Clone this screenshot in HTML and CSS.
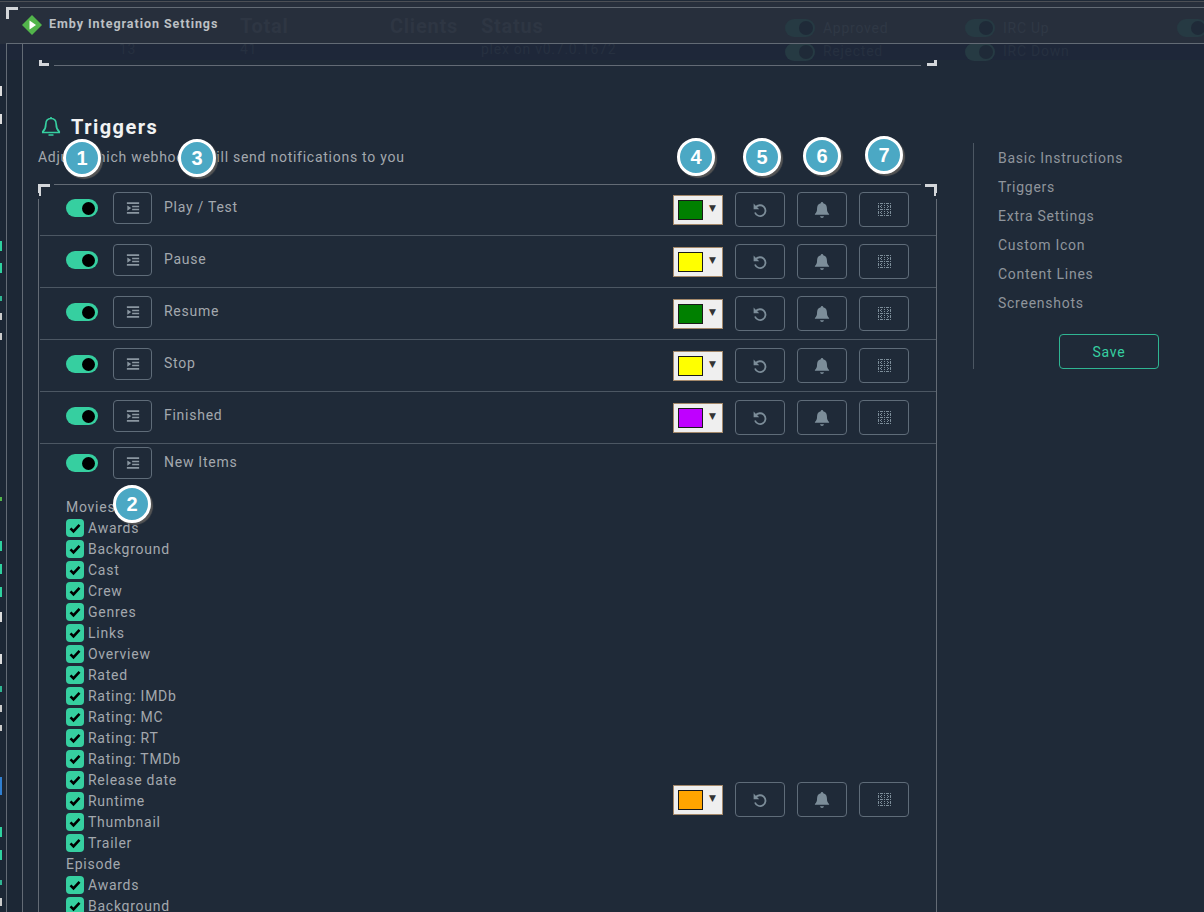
FILE: index.html
```html
<!doctype html>
<html>
<head>
<meta charset="UTF-8">
<title>Emby Integration Settings</title>
<link rel="stylesheet" href="styles.css">
</head>
<body>

<svg class="defs" width="0" height="0">
  <symbol id="ico-indent" viewBox="0 0 16 16">
    <path d="M1 1.5h14v2H1zM7 5.5h8v1.6H7zM7 8.9h8v1.6H7zM1 12.5h14v2H1zM1.5 5v6l4.5-3z"/>
  </symbol>
  <symbol id="ico-reset" viewBox="0 0 16 16">
    <path d="M3.6 5.6A5.4 5.4 0 1 1 3 10.5" fill="none" stroke="currentColor" stroke-width="1.8"/>
    <path d="M1.6 1.6v5.6h5.6z"/>
  </symbol>
  <symbol id="ico-bell" viewBox="0 0 16 16">
    <path d="M8 .8c.7 0 1.1.5 1.1 1.2 2.3.5 3.3 2.4 3.3 4.6 0 2.600.6 3.600 1.900 4.900v.8H1.700v-.8c1.300-1.300 1.900-2.300 1.900-4.900 0-2.200 1-4.100 3.300-4.600C6.900 1.300 7.300.8 8 .8zM6.300 13.500h3.400C9.600 14.500 8.900 15 8 15s-1.600-.5-1.700-1.500z"/>
  </symbol>
  <symbol id="ico-grid" viewBox="0 0 13 13">
    <path d="M.5 0v13M3.500 0v13M6.500 0v13M9.500 0v13M12.500 0v13" fill="none" stroke="currentColor" stroke-dasharray="1 1"/>
    <path d="M0 .5h13M0 6.500h13M0 12.500h13M0 3.500h3M10 3.500h3M0 9.500h3M10 9.500h3" fill="none" stroke="currentColor" stroke-dasharray="1 1"/>
  </symbol>
  <symbol id="ico-check" viewBox="0 0 12 12">
    <path d="M1.500 6.300l3 3 6-6.400" fill="none" stroke="currentColor" stroke-width="2.600"/>
  </symbol>
</svg>

<!-- page behind the modal -->
<div class="behind">
  <div class="behind-head"></div>
  <div class="behind-band"></div>
  <div class="behind-strip"></div>
  <div class="ticks"></div>
  <span class="ghost g-total">Total</span>
  <span class="ghost g-clients">Clients</span>
  <span class="ghost g-status">Status</span>
  <span class="ghost small g-13">13</span>
  <span class="ghost small g-41">41</span>
  <span class="ghost small g-ver">plex on v0.7.0.1672</span>
  <span class="ghost small g-app">Approved</span>
  <span class="ghost small g-rej">Rejected</span>
  <span class="ghost small g-up">IRC Up</span>
  <span class="ghost small g-down">IRC Down</span>
  <span class="gtoggle t-app"></span>
  <span class="gtoggle t-rej"></span>
  <span class="gtoggle t-up"></span>
  <span class="gtoggle t-down"></span>
  <span class="gtoggle t-far"></span>
</div>

<div class="modal">
  <span class="mark mark-tl"></span>
  <header class="modal-head">
    <svg class="logo" viewBox="0 0 20 20" width="20" height="20">
      <path d="M10 0l10 10-10 10L0 10z" fill="#52b54b"/>
      <path d="M7.500 5.500l6.500 4.500-6.500 4.500z" fill="#fff"/>
    </svg>
    <span class="modal-title">Emby Integration Settings</span>
  </header>

  <div class="modal-body">
    <div class="prev-panel">
      <span class="mark mark-bl"></span>
      <span class="mark mark-br"></span>
    </div>

    <div class="columns">
      <main class="content">
        <h2 class="title">
          <svg viewBox="0 0 20 22" width="20" height="22">
            <path d="M10 2.500c-3.400 0-5.200 2.400-5.200 5.700 0 3.500-.8 5.400-3 7.500v.8h16.400v-.8c-2.200-2.100-3-4-3-7.500 0-3.300-1.800-5.700-5.200-5.700zM10 1v1.500M7.500 19h5" fill="none" stroke="#36cfa0" stroke-width="1.700"/>
          </svg>
          Triggers
        </h2>
        <p class="subtitle">Adjust which webhooks will send notifications to you</p>

        <section class="panel">
          <span class="mark mark-tl"></span>
          <span class="mark mark-tr"></span>

          <div class="row">
            <div class="row-main">
              <div class="row-line">
                <span class="toggle"></span>
                <button class="ico-btn"><svg><use href="#ico-indent"/></svg></button>
                <span class="row-name">Play / Test</span>
              </div>
            </div>
            <div class="row-actions">
              <span class="picker"><span class="swatch green"></span><span class="caret">▼</span></span>
              <button class="act-btn"><svg class="i-reset"><use href="#ico-reset"/></svg></button>
              <button class="act-btn"><svg class="i-bell"><use href="#ico-bell"/></svg></button>
              <button class="act-btn"><svg class="i-grid"><use href="#ico-grid"/></svg></button>
            </div>
          </div>

          <div class="row">
            <div class="row-main">
              <div class="row-line">
                <span class="toggle"></span>
                <button class="ico-btn"><svg><use href="#ico-indent"/></svg></button>
                <span class="row-name">Pause</span>
              </div>
            </div>
            <div class="row-actions">
              <span class="picker"><span class="swatch yellow"></span><span class="caret">▼</span></span>
              <button class="act-btn"><svg class="i-reset"><use href="#ico-reset"/></svg></button>
              <button class="act-btn"><svg class="i-bell"><use href="#ico-bell"/></svg></button>
              <button class="act-btn"><svg class="i-grid"><use href="#ico-grid"/></svg></button>
            </div>
          </div>

          <div class="row">
            <div class="row-main">
              <div class="row-line">
                <span class="toggle"></span>
                <button class="ico-btn"><svg><use href="#ico-indent"/></svg></button>
                <span class="row-name">Resume</span>
              </div>
            </div>
            <div class="row-actions">
              <span class="picker"><span class="swatch green"></span><span class="caret">▼</span></span>
              <button class="act-btn"><svg class="i-reset"><use href="#ico-reset"/></svg></button>
              <button class="act-btn"><svg class="i-bell"><use href="#ico-bell"/></svg></button>
              <button class="act-btn"><svg class="i-grid"><use href="#ico-grid"/></svg></button>
            </div>
          </div>

          <div class="row">
            <div class="row-main">
              <div class="row-line">
                <span class="toggle"></span>
                <button class="ico-btn"><svg><use href="#ico-indent"/></svg></button>
                <span class="row-name">Stop</span>
              </div>
            </div>
            <div class="row-actions">
              <span class="picker"><span class="swatch yellow"></span><span class="caret">▼</span></span>
              <button class="act-btn"><svg class="i-reset"><use href="#ico-reset"/></svg></button>
              <button class="act-btn"><svg class="i-bell"><use href="#ico-bell"/></svg></button>
              <button class="act-btn"><svg class="i-grid"><use href="#ico-grid"/></svg></button>
            </div>
          </div>

          <div class="row">
            <div class="row-main">
              <div class="row-line">
                <span class="toggle"></span>
                <button class="ico-btn"><svg><use href="#ico-indent"/></svg></button>
                <span class="row-name">Finished</span>
              </div>
            </div>
            <div class="row-actions">
              <span class="picker"><span class="swatch purple"></span><span class="caret">▼</span></span>
              <button class="act-btn"><svg class="i-reset"><use href="#ico-reset"/></svg></button>
              <button class="act-btn"><svg class="i-bell"><use href="#ico-bell"/></svg></button>
              <button class="act-btn"><svg class="i-grid"><use href="#ico-grid"/></svg></button>
            </div>
          </div>

          <div class="row row-long">
            <div class="row-main">
              <div class="row-line">
                <span class="toggle"></span>
                <button class="ico-btn"><svg><use href="#ico-indent"/></svg></button>
                <span class="row-name">New Items</span>
              </div>
              <div class="fields">
                <div class="group">Movies</div>
                <label class="field"><span class="box"><svg><use href="#ico-check"/></svg></span>Awards</label>
                <label class="field"><span class="box"><svg><use href="#ico-check"/></svg></span>Background</label>
                <label class="field"><span class="box"><svg><use href="#ico-check"/></svg></span>Cast</label>
                <label class="field"><span class="box"><svg><use href="#ico-check"/></svg></span>Crew</label>
                <label class="field"><span class="box"><svg><use href="#ico-check"/></svg></span>Genres</label>
                <label class="field"><span class="box"><svg><use href="#ico-check"/></svg></span>Links</label>
                <label class="field"><span class="box"><svg><use href="#ico-check"/></svg></span>Overview</label>
                <label class="field"><span class="box"><svg><use href="#ico-check"/></svg></span>Rated</label>
                <label class="field"><span class="box"><svg><use href="#ico-check"/></svg></span>Rating: IMDb</label>
                <label class="field"><span class="box"><svg><use href="#ico-check"/></svg></span>Rating: MC</label>
                <label class="field"><span class="box"><svg><use href="#ico-check"/></svg></span>Rating: RT</label>
                <label class="field"><span class="box"><svg><use href="#ico-check"/></svg></span>Rating: TMDb</label>
                <label class="field"><span class="box"><svg><use href="#ico-check"/></svg></span>Release date</label>
                <label class="field"><span class="box"><svg><use href="#ico-check"/></svg></span>Runtime</label>
                <label class="field"><span class="box"><svg><use href="#ico-check"/></svg></span>Thumbnail</label>
                <label class="field"><span class="box"><svg><use href="#ico-check"/></svg></span>Trailer</label>
                <div class="group">Episode</div>
                <label class="field"><span class="box"><svg><use href="#ico-check"/></svg></span>Awards</label>
                <label class="field"><span class="box"><svg><use href="#ico-check"/></svg></span>Background</label>
                <label class="field"><span class="box"><svg><use href="#ico-check"/></svg></span>Cast</label>
                <label class="field"><span class="box"><svg><use href="#ico-check"/></svg></span>Crew</label>
                <label class="field"><span class="box"><svg><use href="#ico-check"/></svg></span>Genres</label>
                <label class="field"><span class="box"><svg><use href="#ico-check"/></svg></span>Links</label>
                <label class="field"><span class="box"><svg><use href="#ico-check"/></svg></span>Overview</label>
                <label class="field"><span class="box"><svg><use href="#ico-check"/></svg></span>Rated</label>
                <label class="field"><span class="box"><svg><use href="#ico-check"/></svg></span>Rating: IMDb</label>
                <label class="field"><span class="box"><svg><use href="#ico-check"/></svg></span>Rating: MC</label>
                <label class="field"><span class="box"><svg><use href="#ico-check"/></svg></span>Rating: RT</label>
                <label class="field"><span class="box"><svg><use href="#ico-check"/></svg></span>Rating: TMDb</label>
                <label class="field"><span class="box"><svg><use href="#ico-check"/></svg></span>Release date</label>
              </div>
            </div>
            <div class="row-actions">
              <span class="picker"><span class="swatch orange"></span><span class="caret">▼</span></span>
              <button class="act-btn"><svg class="i-reset"><use href="#ico-reset"/></svg></button>
              <button class="act-btn"><svg class="i-bell"><use href="#ico-bell"/></svg></button>
              <button class="act-btn"><svg class="i-grid"><use href="#ico-grid"/></svg></button>
            </div>
          </div>
        </section>
      </main>

      <aside class="side">
        <nav class="side-nav">
          <a>Basic Instructions</a>
          <a>Triggers</a>
          <a>Extra Settings</a>
          <a>Custom Icon</a>
          <a>Content Lines</a>
          <a>Screenshots</a>
        </nav>
        <button class="save">Save</button>
      </aside>
    </div>
  </div>
</div>

<!-- numbered callouts pasted over the screenshot -->
<span class="badge b1">1</span>
<span class="badge b2">2</span>
<span class="badge b3">3</span>
<span class="badge b4">4</span>
<span class="badge b5">5</span>
<span class="badge b6">6</span>
<span class="badge b7">7</span>

</body>
</html>
```

FILE: styles.css
```css
html, body { height: 100%; }
body { margin: 0; overflow: hidden; position: relative; background: #1f2a38; color: #a3a8ae; font-family: Roboto, "Liberation Sans", sans-serif; font-size: 14px; letter-spacing: .74px; }
.defs { position: absolute; }

/* page behind */
.behind { position: absolute; inset: 0; overflow: hidden; }
.behind-head { position: absolute; left: 0; right: 0; top: 1px; height: 42px; background: #272f3c; border-top: 1px solid #4c4f55; }
.behind-band { position: absolute; left: 0; right: 0; top: 44px; height: 16px; background: #1e2739; }
.behind-strip { position: absolute; left: 0; top: 60px; bottom: 0; width: 22px; background: #1c2735; }
.ticks { position: absolute; left: 0; top: 0; width: 2px; height: 912px; background: linear-gradient(to bottom,
  transparent 86px, #ddd 86px, #ddd 96px, transparent 96px,
  transparent 114px, #ddd 114px, #ddd 124px, transparent 124px,
  transparent 241px, #2fd19f 241px, #2fd19f 251px, transparent 251px,
  transparent 263px, #2fd19f 263px, #2fd19f 273px, transparent 273px,
  transparent 296px, #2fb592 296px, #2fb592 301px, transparent 301px,
  transparent 313px, #ccc 313px, #ccc 320px, transparent 320px,
  transparent 333px, #ccc 333px, #ccc 340px, transparent 340px,
  transparent 497px, #52b54b 497px, #52b54b 501px, transparent 501px,
  transparent 541px, #2fd19f 541px, #2fd19f 551px, transparent 551px,
  transparent 564px, #2fd19f 564px, #2fd19f 574px, transparent 574px,
  transparent 587px, #2fd19f 587px, #2fd19f 597px, transparent 597px,
  transparent 612px, #ddd 612px, #ddd 622px, transparent 622px,
  transparent 654px, #ddd 654px, #ddd 664px, transparent 664px,
  transparent 686px, #2fb592 686px, #2fb592 692px, transparent 692px,
  transparent 705px, #ccc 705px, #ccc 712px, transparent 712px,
  transparent 725px, #ccc 725px, #ccc 731px, transparent 731px,
  transparent 777px, #2f7fd1 777px, #2f7fd1 795px, transparent 795px,
  transparent 827px, #2fd19f 827px, #2fd19f 837px, transparent 837px,
  transparent 850px, #2fd19f 850px, #2fd19f 860px, transparent 860px,
  transparent 880px, #2fb592 880px, #2fb592 885px, transparent 885px,
  transparent 898px, #ccc 898px, #ccc 906px, transparent 906px); }
.ghost { position: absolute; color: #2e3643; font-size: 20px; font-weight: 700; }
.ghost.small { color: #263040; font-size: 14px; font-weight: 400; }
.g-total { left: 240px; top: 14px; }
.g-clients { left: 390px; top: 14px; }
.g-status { left: 481px; top: 14px; }
.g-13 { left: 119px; top: 41px; }
.g-41 { left: 240px; top: 41px; }
.g-ver { left: 481px; top: 41px; }
.g-app { left: 823px; top: 20px; }
.g-rej { left: 823px; top: 43px; }
.g-up { left: 1003px; top: 20px; }
.g-down { left: 1003px; top: 43px; }
.ghost.small.g-app, .ghost.small.g-up { color: #2f3845; }
.gtoggle { position: absolute; width: 30px; height: 18px; border-radius: 9px; background: #263a43; }
.gtoggle::after { content: ""; position: absolute; right: 2px; top: 2px; width: 14px; height: 14px; border-radius: 50%; background: #1f2a38; }
.t-app { left: 785px; top: 19px; }
.t-rej { left: 785px; top: 43px; }
.t-up { left: 965px; top: 19px; }
.t-down { left: 965px; top: 43px; }
.t-far { left: 1177px; top: 19px; }

/* modal */
.modal { position: absolute; left: 6px; top: 7px; right: 0; bottom: 0; }
.modal-head { height: 36px; display: flex; align-items: center; gap: 7px; padding-left: 16px; border-bottom: 1px solid #636b75; position: relative; }
.modal-head::before { content: ""; position: absolute; left: 14px; right: 0; top: 0; height: 1px; background: #636b75; }
.modal-title { color: #bcc0c4; font-size: 12.500px; font-weight: 700; letter-spacing: .95px; margin-top: -3px; }
.modal-body { border-left: 1px solid #636b75; height: 900px; padding-left: 15px; margin-top: -1px; position: relative; }

.mark { position: absolute; width: 9px; height: 9px; border: 0 solid #d3d6da; }
.mark-tl { left: 0; top: 0; border-width: 3px 0 0 3px; }
.mark-tr { right: 0; top: 0; border-width: 3px 3px 0 0; }
.mark-bl { left: 16px; bottom: 0; border-width: 0 0 3px 3px; }
.mark-br { right: 0; bottom: 0; border-width: 0 3px 3px 0; }

.prev-panel { height: 23px; border-left: 1px solid #636b75; position: relative; width: 914px; }
.prev-panel::after { content: ""; position: absolute; left: 31px; right: 16px; bottom: 0; height: 1px; background: #636b75; }
.prev-panel .mark { width: 7px; height: 3px; }

.columns { border-left: 1px solid #636b75; display: grid; grid-template-columns: 899px 231px; column-gap: 36px; padding-left: 15px; }
.title { margin: 0; height: 29px; padding-top: 46px; display: flex; align-items: center; gap: 10px; color: #f1f2f3; font-size: 20px; font-weight: 700; letter-spacing: 1.450px; padding-left: 3px; }
.subtitle { margin: 6px 0 17px; height: 20px; line-height: 20px; }

/* triggers panel */
.panel { position: relative; border-left: 1px solid #636b75; border-right: 1px solid #636b75; padding: 0 0 0 1px; }
.panel::before { content: ""; position: absolute; left: 15px; right: 15px; top: 0; height: 1px; background: #636b75; }
.panel .mark { left: -1px; }
.panel .mark-tr { left: auto; right: -1px; }
/* small gap left in the side rules below each corner */
.panel .mark-tl::after, .panel .mark-tr::after { content: ""; position: absolute; top: 6px; width: 1px; height: 6px; background: #1f2a38; }
.panel .mark-tl::after { left: -3px; }
.panel .mark-tr::after { right: -3px; }
.row { display: flex; justify-content: space-between; align-items: center; padding: 8px 27px 8px 26px; border-bottom: 1px solid #4c5763; }
.row-long { padding-top: 3px; }
.row-main { align-self: flex-start; }
.row-line { display: flex; align-items: center; height: 32px; }
.toggle { width: 32px; height: 18px; border-radius: 9px; background: #36cfa0; position: relative; margin-right: 15px; }
.toggle::after { content: ""; position: absolute; right: 3px; top: 2.500px; width: 13px; height: 13px; border-radius: 50%; background: #000; }
.ico-btn { width: 39px; height: 32px; padding: 0; border: 1px solid #5f6c79; border-radius: 4px; background: none; color: #8b97a1; display: flex; align-items: center; justify-content: center; margin-right: 12px; }
.ico-btn svg { width: 14px; height: 14px; fill: currentColor; }
.row-name { margin-top: -2px; }
.row-actions { display: flex; align-items: center; gap: 12px; }
.picker { width: 50px; height: 30px; box-sizing: border-box; display: flex; align-items: center; gap: 6px; padding-left: 4px; background: #efefef; border: 1px solid #a3886a; color: #333; }
.swatch { width: 25px; height: 20px; box-sizing: border-box; border: 1px solid #1a1a1a; }
.green { background: #008000; }
.yellow { background: #ffff00; }
.purple { background: #bf00ff; }
.orange { background: #ffa500; }
.caret { font-size: 9px; letter-spacing: 0; font-family: "DejaVu Sans", sans-serif; margin-top: -3px; }
.act-btn { width: 50px; height: 35px; padding: 0; border: 1px solid #5f6c79; border-radius: 4px; background: none; color: #7c8d99; display: flex; align-items: center; justify-content: center; }
.act-btn svg { width: 16px; height: 16px; fill: currentColor; }
.act-btn .i-bell { width: 18px; height: 18px; }
.act-btn .i-grid { width: 13px; height: 13px; }

.fields { margin-top: 18px; padding-bottom: 5px; }
.group { height: 20px; line-height: 21px; }
.field + .group { height: 21px; line-height: 23px; }
.field { height: 21px; display: flex; align-items: center; gap: 4px; }
.box { width: 18px; height: 18px; border-radius: 4px; background: #36cfa0; color: #000; display: flex; align-items: center; justify-content: center; }
.box svg { width: 12px; height: 12px; }

/* right column */
.side { padding-top: 77px; }
.side-nav { display: flex; flex-direction: column; gap: 8px; border-left: 1px solid #4c5763; padding: 5px 0 0 24px; height: 221px; }
.side-nav a { height: 21px; line-height: 21px; color: #8f959c; }
.save { width: 100px; height: 35px; margin: -35px 0 0 86px; display: block; position: relative; background: none; border: 1px solid #2fb592; border-radius: 4px; color: #36cfa0; font: inherit; letter-spacing: .74px; }

/* callouts */
.badge { position: absolute; width: 38px; height: 38px; box-sizing: border-box; border: 3px solid #fff; border-radius: 50%; background: #4ba8c4; color: #fff; font-family: "Liberation Sans", sans-serif; font-size: 20px; font-weight: 700; letter-spacing: 0; display: flex; align-items: center; justify-content: center; box-shadow: 2px 2px 1px #555; }
.b1 { left: 63px; top: 139px; }
.b2 { left: 113px; top: 485px; }
.b3 { left: 178px; top: 139px; }
.b4 { left: 677px; top: 138px; }
.b5 { left: 743px; top: 138px; }
.b6 { left: 803px; top: 137px; }
.b7 { left: 865px; top: 136px; }
```
